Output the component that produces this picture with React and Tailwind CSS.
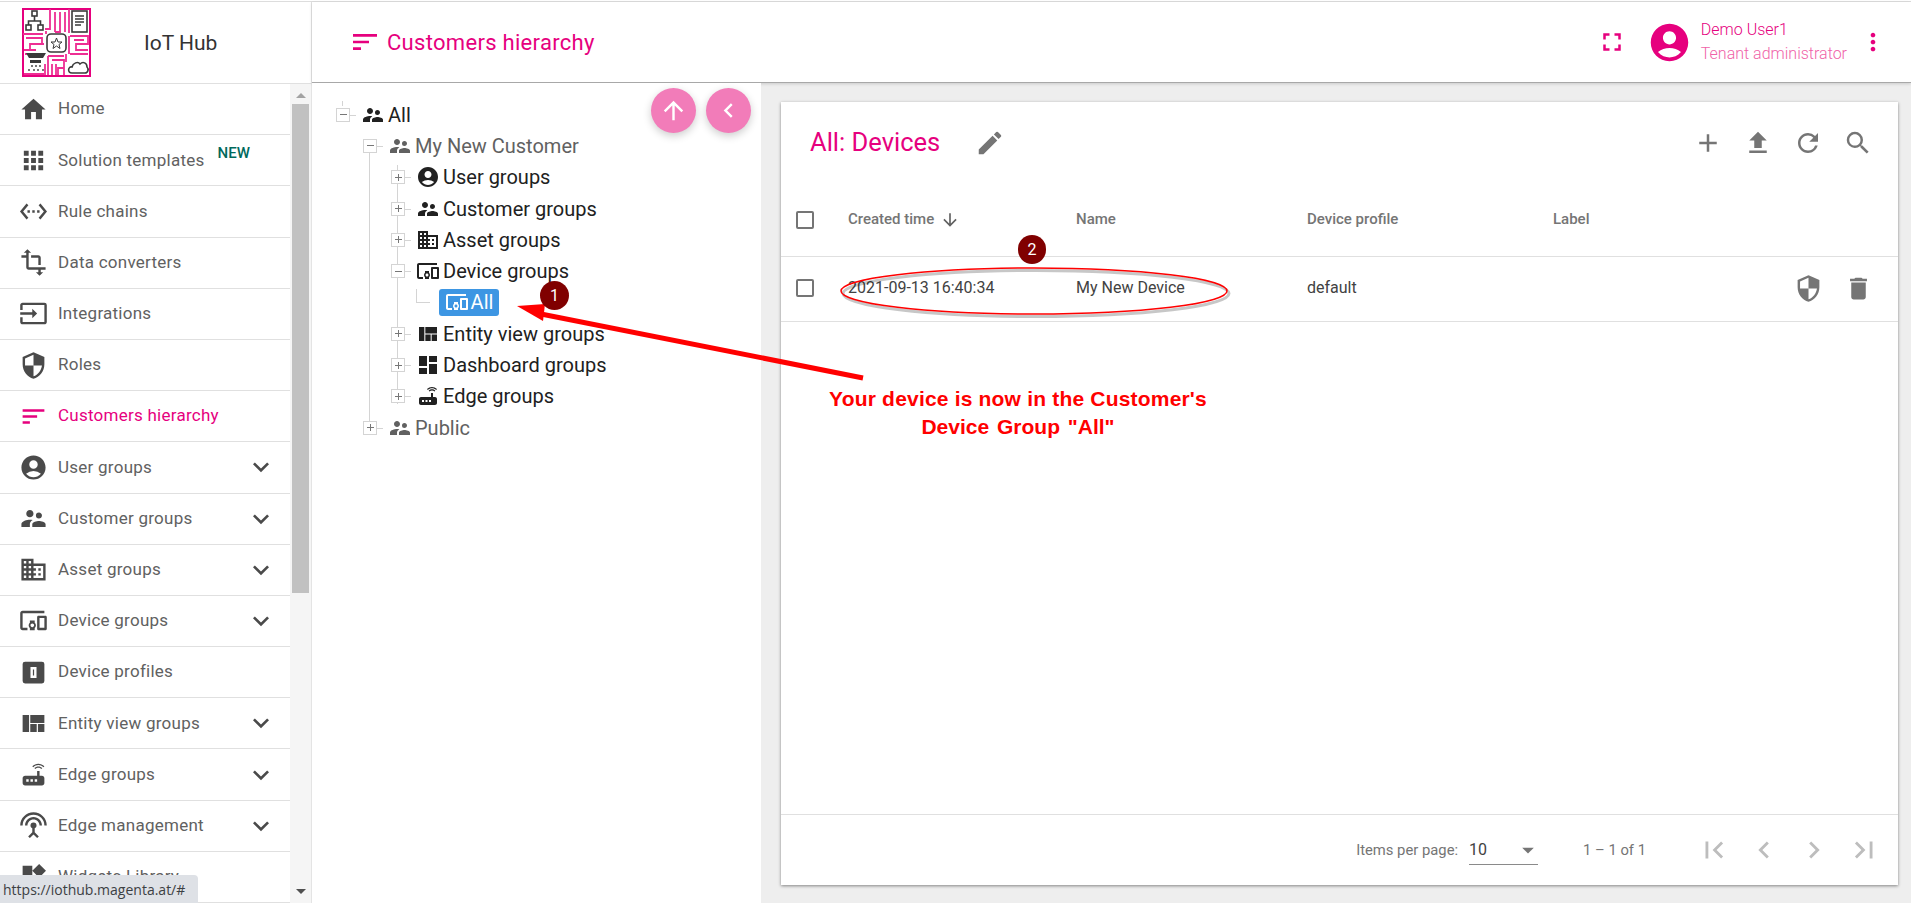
import React from "react";
import {
  MdHome, MdApps, MdSettingsEthernet, MdTransform, MdInput, MdSecurity, MdSort,
  MdAccountCircle, MdSupervisorAccount, MdDomain, MdDevicesOther, MdViewQuilt,
  MdRouter, MdSettingsInputAntenna, MdWidgets, MdKeyboardArrowDown, MdFullscreen,
  MdMoreVert, MdEdit, MdAdd, MdFileUpload, MdRefresh, MdSearch, MdDelete,
  MdArrowDownward, MdArrowUpward, MdChevronLeft, MdChevronRight, MdFirstPage,
  MdLastPage, MdDashboard, MdArrowDropDown,
} from "react-icons/md";

const DeviceProfileIcon = ({ size = 24 }) => (
  <svg width={size} height={size} viewBox="0 0 24 24" fill="currentColor">
    <path
      fillRule="evenodd"
      d="M5 3h14a2 2 0 0 1 2 2v14a2 2 0 0 1-2 2H5a2 2 0 0 1-2-2V5a2 2 0 0 1 2-2zm4.5 4.5v9h5v-9h-5zm2 2h1v5h-1v-5z"
    />
  </svg>
);

const Logo = () => (
  <svg width="69" height="69" viewBox="0 0 69 69" className="shrink-0">
    <rect width="69" height="69" fill="#ffffff" />
    <rect x="1" y="1" width="67" height="67" fill="none" stroke="#e6007e" strokeWidth="2" />
    <g fill="none" stroke="#ee2e93" strokeWidth="1.8">
      <path d="M28 1v20h-5M33 4v20M38 4v20h-5M43 4v20M47 1v24" />
      <path d="M1 26h20M4 30h16v6H8v6H2M12 36h10M24 26v-3M3 46h20M2 42h12" />
      <path d="M48 28h18v8H54v6h12M52 32h10M48 46h18M47 28v18M44 46v8" />
      <path d="M26 48h16M26 48v19M30 52h12v8h-6v7M34 56v11M42 60v7M30 56v11" />
      <path d="M23 56v11M2 66h20" />
    </g>
    <g fill="none" stroke="#3a3a3a" strokeWidth="1.6">
      <rect x="10" y="3" width="5" height="5" />
      <rect x="4" y="17" width="5" height="5" />
      <rect x="16" y="17" width="5" height="5" />
      <path d="M12.5 8v5H6.500v4M12.500 13h6v4" />
      <rect x="50" y="3" width="15" height="21" />
      <path d="M53 8h9M53 11h9M53 14h9M53 17h6" />
      <rect x="25" y="26" width="19" height="18" rx="4" fill="#ffffff" />
      <path d="M34.500 30l1.500 4h4l-3 2.500 1 4-3.500-2.500-3.500 2.500 1-4-3-2.500h4z" strokeWidth="1" />
      <path d="M50 65c-5 0-4-7 0-6 1-4 6-6 8-3 3-3 7-1 7 3 2 2 1 6-2 6z" fill="#ffffff" />
    </g>
    <path d="M4 45h20l-3 5H7z" fill="#3a3a3a" />
    <path d="M8 52h11v3H8z" fill="#3a3a3a" />
    <path d="M9 57h2v2H9zM13 57h2v2h-2zM17 57h2v2h-2zM6 61h2v2H6zM11 61h2v2h-2zM15 61h2v2h-2zM20 61h2v2h-2z" fill="#777777" />
  </svg>
);

const navItems = [
  { label: "Home", icon: MdHome },
  { label: "Solution templates", icon: MdApps, badge: true },
  { label: "Rule chains", icon: MdSettingsEthernet },
  { label: "Data converters", icon: MdTransform },
  { label: "Integrations", icon: MdInput },
  { label: "Roles", icon: MdSecurity },
  { label: "Customers hierarchy", icon: MdSort, active: true },
  { label: "User groups", icon: MdAccountCircle, more: true },
  { label: "Customer groups", icon: MdSupervisorAccount, more: true },
  { label: "Asset groups", icon: MdDomain, more: true },
  { label: "Device groups", icon: MdDevicesOther, more: true },
  { label: "Device profiles", icon: DeviceProfileIcon },
  { label: "Entity view groups", icon: MdViewQuilt, more: true },
  { label: "Edge groups", icon: MdRouter, more: true },
  { label: "Edge management", icon: MdSettingsInputAntenna, more: true },
  { label: "Widgets Library", icon: MdWidgets },
];

const NavRow = ({ item }) => {
  const Icon = item.icon;
  return (
    <div
      className={`h-[51.2px] shrink-0 border-b border-[#e0e0e0] pl-[19px] pr-[13px] flex items-center ${
        item.active ? "text-[#e6007e]" : "text-[#616161]"
      }`}
    >
      <span className={`w-[39px] shrink-0 ${item.active ? "text-[#e6007e]" : "text-[#4a4a4a]"}`}>
        <Icon size={29} />
      </span>
      <span className="text-[17px] tracking-[0.25px]">{item.label}</span>
      {item.badge && (
        <span className="ml-[13px] -mt-[15px] text-[15px] font-medium text-[#00695c]">NEW</span>
      )}
      {item.more && <MdKeyboardArrowDown size={32} className="ml-auto text-[#4a4a4a]" />}
    </div>
  );
};

// jstree style +/- box with its little connector stub
const TreeToggle = ({ open }) => (
  <span className="relative w-[14px] h-[14px] shrink-0 border border-[#d4d4d4] bg-white flex items-center justify-center">
    <span className="absolute w-[7px] h-px bg-[#777]" />
    {!open && <span className="absolute h-[7px] w-px bg-[#777]" />}
    <span className="absolute left-[13px] top-[6px] w-[6px] h-px bg-[#d4d4d4]" />
  </span>
);

const TreeRow = ({ level, open, icon: Icon, label, muted }) => (
  <div
    className={`h-[31.3px] flex items-center ${muted ? "text-[#616161]" : "text-[#212121]"} ${
      level === 0 ? "pl-[24px]" : level === 1 ? "pl-[51px]" : "pl-[79px]"
    }`}
  >
    <TreeToggle open={open} />
    <span className="w-[26px] ml-[10px] shrink-0 flex justify-center">
      <Icon size={24} />
    </span>
    <span className="text-[20px] ml-[2px] leading-none">{label}</span>
  </div>
);

const TreePane = () => (
  <div className="relative w-[449px] shrink-0 bg-white pt-[16px]">
    {/* vertical guide lines of the tree */}
    <span className="absolute left-[30px] top-[18px] h-[5px] w-px bg-[#d4d4d4]" />
    <span className="absolute left-[57px] top-[59px] h-[283px] w-px bg-[#d4d4d4]" />
    <span className="absolute left-[85px] top-[82px] h-[239px] w-px bg-[#d4d4d4]" />
    <span className="absolute left-[104px] top-[206px] h-[14px] w-[14px] border-l border-b border-[#d4d4d4]" />

    <TreeRow level={0} open icon={MdSupervisorAccount} label="All" />
    <TreeRow level={1} open icon={MdSupervisorAccount} label="My New Customer" muted />
    <TreeRow level={2} icon={MdAccountCircle} label="User groups" />
    <TreeRow level={2} icon={MdSupervisorAccount} label="Customer groups" />
    <TreeRow level={2} icon={MdDomain} label="Asset groups" />
    <TreeRow level={2} open icon={MdDevicesOther} label="Device groups" />
    <div className="h-[31.3px] pl-[127px] flex items-center">
      <span className="h-[27px] w-[60px] rounded-[3px] bg-[#3d96e3] text-white flex items-center justify-center gap-[2px]">
        <MdDevicesOther size={24} />
        <span className="text-[20px] leading-none">All</span>
      </span>
    </div>
    <TreeRow level={2} icon={MdViewQuilt} label="Entity view groups" />
    <TreeRow level={2} icon={MdDashboard} label="Dashboard groups" />
    <TreeRow level={2} icon={MdRouter} label="Edge groups" />
    <TreeRow level={1} icon={MdSupervisorAccount} label="Public" muted />

    <div className="absolute right-[10px] top-[5px] flex gap-[10px]">
      <button className="w-[45px] h-[45px] rounded-full bg-[#f27cb9] text-white flex items-center justify-center shadow-[0_3px_8px_rgba(0,0,0,0.2)]">
        <MdArrowUpward size={29} />
      </button>
      <button className="w-[45px] h-[45px] rounded-full bg-[#f27cb9] text-white flex items-center justify-center shadow-[0_3px_8px_rgba(0,0,0,0.2)]">
        <MdChevronLeft size={29} />
      </button>
    </div>
  </div>
);

const Checkbox = () => (
  <span className="block w-[18px] h-[18px] rounded-[2px] border-2 border-[#757575]" />
);

const App = () => (
  <div className="relative w-full h-screen overflow-hidden bg-white font-['Roboto',sans-serif]">
    <div className="h-[2px] border-b border-[#dddddd]" />
    <div className="flex h-[901px]">
      {/* Sidebar */}
      <aside className="w-[312px] shrink-0 border-r border-[#e4e4e4] flex flex-col">
        <div className="h-[82px] shrink-0 border-b border-[#e0e0e0] pl-[22px] flex items-center">
          <Logo />
          <span className="ml-[53px] mt-[3px] text-[21px] text-[#333333]">IoT Hub</span>
        </div>
        <div className="flex-1 flex min-h-0">
          <nav className="flex-1 flex flex-col overflow-hidden">
            {navItems.map((item) => (
              <NavRow key={item.label} item={item} />
            ))}
          </nav>
          <div className="w-[21px] shrink-0 bg-[#f5f5f5] flex flex-col items-center">
            <span className="mt-[9px] mb-[6px] w-0 h-0 border-x-[5px] border-x-transparent border-b-[5px] border-b-[#a3a3a3]" />
            <span className="w-[17px] h-[489px] bg-[#c1c1c1]" />
            <span className="mt-auto mb-[9px] w-0 h-0 border-x-[5px] border-x-transparent border-t-[5px] border-t-[#505050]" />
          </div>
        </div>
      </aside>

      {/* Main */}
      <div className="flex-1 flex flex-col min-w-0">
        <header className="relative h-[81px] shrink-0 bg-white border-b border-[#a8a8a8] shadow-[0_1px_3px_rgba(0,0,0,0.15)] pl-[37px] pr-[24px] flex items-center text-[#e6007e]">
          <MdSort size={32} />
          <span className="ml-[6px] text-[22px] tracking-[0.3px]">Customers hierarchy</span>
          <MdFullscreen size={30} className="ml-auto" />
          <MdAccountCircle size={45} className="ml-[20px]" />
          <div className="ml-[9px] text-[16px] font-light leading-[24px]">
            <div>Demo User1</div>
            <div className="text-[#f062a8]">Tenant administrator</div>
          </div>
          <MdMoreVert size={28} className="ml-[12px]" />
        </header>

        <div className="flex-1 flex min-h-0">
          <TreePane />
          <div className="flex-1 min-w-0 bg-[#eeeeee] pl-[20px] pr-[13px] pt-[19px] pb-[18px] flex">
            <div className="flex-1 bg-white shadow-[0_1px_3px_rgba(0,0,0,0.45)] flex flex-col">
              {/* Toolbar */}
              <div className="h-[81px] shrink-0 pl-[29px] pr-[25px] flex items-center text-[#757575]">
                <span className="text-[25.5px] text-[#e6007e] w-[165px]">All: Devices</span>
                <MdEdit size={30} />
                <div className="ml-auto flex gap-[20px]">
                  <MdAdd size={30} />
                  <MdFileUpload size={30} />
                  <MdRefresh size={30} />
                  <MdSearch size={30} />
                </div>
              </div>

              {/* Table */}
              <div className="h-[74px] shrink-0 border-b border-[#e0e0e0] grid grid-cols-[67px_228px_231px_246px_1fr] items-center text-[15px] font-medium text-[#757575]">
                <span className="pl-[15px]"><Checkbox /></span>
                <span className="flex items-center gap-[6px]">
                  Created time <MdArrowDownward size={20} className="text-[#616161]" />
                </span>
                <span>Name</span>
                <span>Device profile</span>
                <span>Label</span>
              </div>
              <div className="h-[65px] shrink-0 border-b border-[#e0e0e0] pb-[2px] grid grid-cols-[67px_228px_231px_246px_1fr] items-center text-[16px] text-[#424242]">
                <span className="pl-[15px]"><Checkbox /></span>
                <span>2021-09-13 16:40:34</span>
                <span>My New Device</span>
                <span>default</span>
                <span className="flex justify-end gap-[21px] pr-[25px] text-[#757575]">
                  <MdSecurity size={29} />
                  <MdDelete size={29} />
                </span>
              </div>

              {/* Paginator */}
              <div className="mt-auto h-[71px] shrink-0 border-t border-[#e0e0e0] pr-[17px] flex items-center justify-end text-[14.8px] text-[#757575]">
                <span>Items per page:</span>
                <span className="ml-[11px] w-[69px] h-[29px] border-b border-[#8a8a8a] flex items-center justify-between text-[16px] text-[#424242]">
                  10
                  <MdArrowDropDown size={28} className="-mr-[4px] text-[#757575]" />
                </span>
                <span className="ml-[45px] mr-[51px]">1 – 1 of 1</span>
                <div className="flex gap-[16px] text-[#bdbdbd]">
                  <MdFirstPage size={34} />
                  <MdChevronLeft size={34} />
                  <MdChevronRight size={34} />
                  <MdLastPage size={34} />
                </div>
              </div>
            </div>
          </div>
        </div>
      </div>
    </div>

    {/* Browser status bubble */}
    <div className="absolute left-0 bottom-0 w-[198px] h-[28px] rounded-tr-[4px] bg-[#dee1e6] pl-[3px] flex items-center text-[14px] text-[#3c4043] font-['Open_Sans',sans-serif]">
      https://iothub.magenta.at/#
    </div>

    {/* Annotations drawn on top of the screenshot */}
    <svg className="absolute inset-0 pointer-events-none" width="1911" height="903">
      <path d="M863 378L536 313" stroke="#ff0000" strokeWidth="5" fill="none" />
      <path d="M517 306L545 304L543 321Z" fill="#ff0000" />
      <ellipse cx="1036" cy="293.500" rx="193" ry="23" fill="none" stroke="#000" strokeOpacity="0.22" strokeWidth="3" />
      <ellipse cx="1034" cy="291" rx="193" ry="23" fill="none" stroke="#ff0000" strokeWidth="1.500" />
    </svg>
    <span className="absolute left-[540px] top-[281px] w-[29px] h-[29px] rounded-full bg-[#800000] text-white text-[16px] flex items-center justify-center">1</span>
    <span className="absolute left-[1018px] top-[235px] w-[28px] h-[29px] rounded-full bg-[#800000] text-white text-[16px] flex items-center justify-center">2</span>
    <div className="absolute left-[788px] top-[385px] w-[460px] text-center text-[21px] leading-[28px] font-bold text-[#ff0000] font-['Liberation_Sans',sans-serif]">
      <div className="tracking-[0.19px]">Your device is now in the Customer's</div>
      <div className="[word-spacing:2px]">Device Group "All"</div>
    </div>
  </div>
);

export default App;
